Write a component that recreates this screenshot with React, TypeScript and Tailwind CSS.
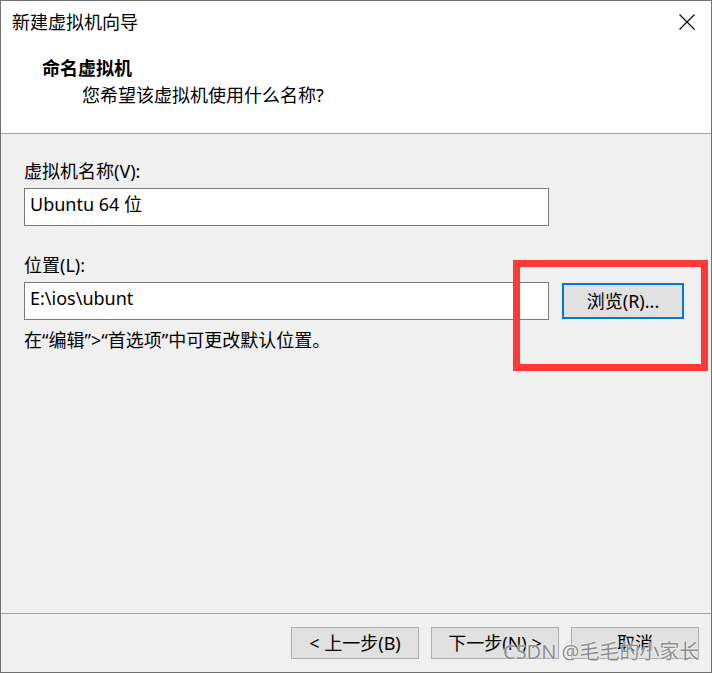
import React from 'react';

const FONT = '"Noto Sans", "Noto Sans CJK SC", sans-serif';

function CloseIcon() {
  return (
    <svg width="16" height="16" viewBox="0 0 16 16" className="shrink-0">
      <path d="M0.5 0.5 L15.5 15.5 M15.5 0.5 L0.5 15.5" stroke="#000" strokeWidth="1.1" fill="none" />
    </svg>
  );
}

function WizardButton({ children }: { children: React.ReactNode }) {
  return (
    <button
      type="button"
      className="w-[128px] h-[32px] bg-[#e1e1e1] border border-[#adadad] text-[18px] leading-[24px] text-black"
    >
      {children}
    </button>
  );
}

export default function App() {
  return (
    <div
      className="relative w-[712px] h-[673px] border border-[#707070] bg-[#f0f0f0] flex flex-col text-black"
      style={{ fontFamily: FONT }}
    >
      {/* header */}
      <div className="h-[133px] bg-white border-b border-[#a0a0a0] shrink-0">
        <div className="h-[42px] flex items-center justify-between pl-[11px] pr-[16px]">
          <span className="text-[18px] leading-[24px]">新建虚拟机向导</span>
          <CloseIcon />
        </div>
        <div className="mt-[13px] pl-[41px] text-[18px] leading-[24px] font-bold">命名虚拟机</div>
        <div className="mt-[3px] pl-[81px] text-[18px] leading-[24px]">您希望该虚拟机使用什么名称?</div>
      </div>

      {/* body */}
      <div className="flex-1 pl-[23px] text-[18px] leading-[24px]">
        <div className="mt-[25px]">虚拟机名称(V):</div>
        <div className="mt-[5px] w-[525px] h-[38px] bg-white border border-[#7a7a7a] pl-[5px] pt-[2px] leading-[26px]">
          Ubuntu 64 位
        </div>

        <div className="mt-[27px]">位置(L):</div>
        <div className="mt-[5px] flex items-center gap-[13px]">
          <div className="w-[525px] h-[38px] bg-white border border-[#7a7a7a] pl-[5px] pt-[2px] leading-[26px]">
            E:\ios\ubunt
          </div>
          <button
            type="button"
            className="w-[122px] h-[36px] bg-[#e1e1e1] border-2 border-[#0078d7] text-[18px] leading-[24px]"
          >
            浏览(R)...
          </button>
        </div>
        <div className="mt-[8px]">在“编辑”&gt;“首选项”中可更改默认位置。</div>
      </div>

      {/* footer */}
      <div className="h-[59px] shrink-0 border-t border-[#a0a0a0] flex justify-end items-start pt-[13px] pr-[12px] gap-[12px]">
        <WizardButton>&lt; 上一步(B)</WizardButton>
        <WizardButton>下一步(N) &gt;</WizardButton>
        <WizardButton>取消</WizardButton>
      </div>

      {/* annotation */}
      <div className="absolute left-[512px] top-[259px] w-[195px] h-[111px] border-[7px] border-[#ff3838]" />

      {/* watermark */}
      <div className="absolute left-[502px] top-[639px] text-[20px] leading-[24px] text-[#8c8c8c] whitespace-nowrap [text-shadow:0_0_2px_#fff,0_0_1px_#fff]">
        CSDN @毛毛的小家长
      </div>
    </div>
  );
}
